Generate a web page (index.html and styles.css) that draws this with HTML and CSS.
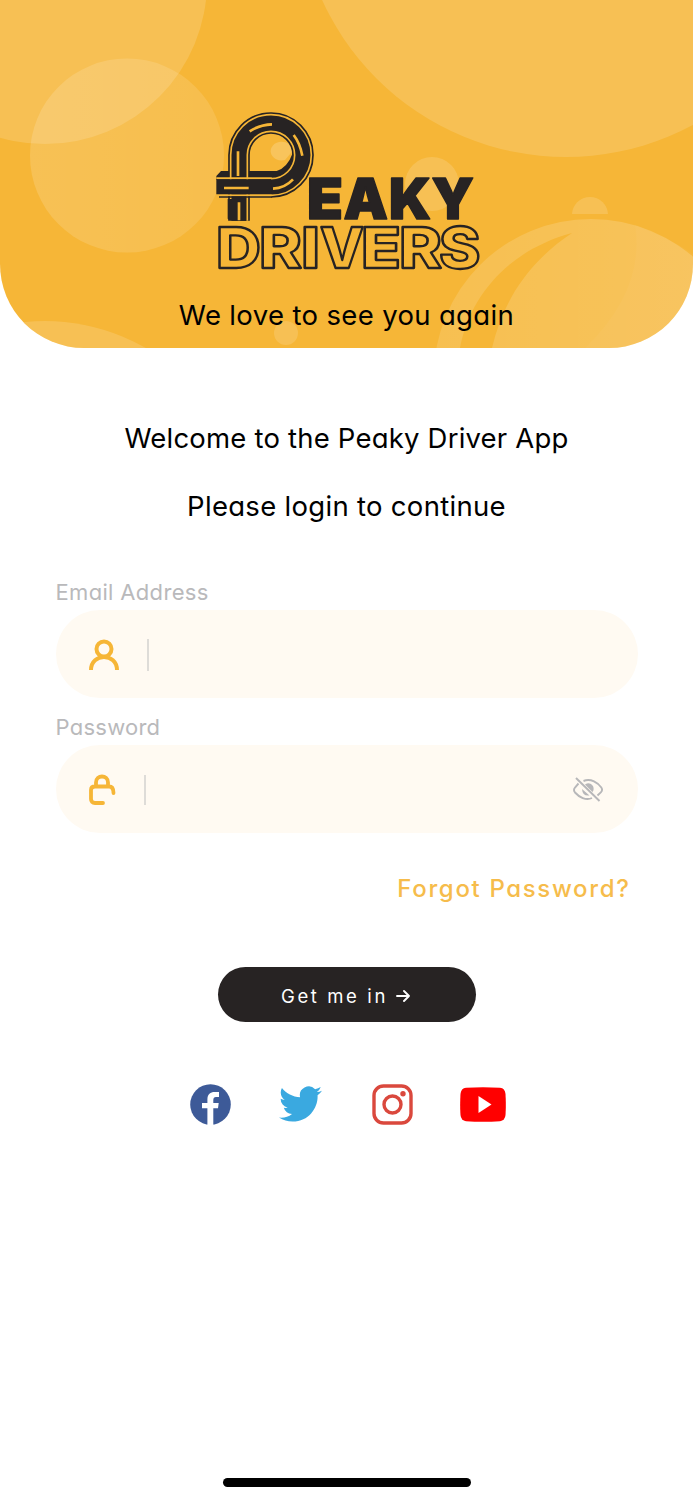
FILE: index.html
```html
<!DOCTYPE html>
<html lang="en">
<head>
<meta charset="utf-8">
<title>Peaky Drivers – Login</title>
<link rel="stylesheet" href="styles.css">
</head>
<body>
<main class="screen">
  <header class="hero">
    <svg class="bubbles" viewBox="0 0 693 348" aria-hidden="true">
      <defs>
        <linearGradient id="fade" x1="0" x2="1"><stop offset="0" stop-color="#fff" stop-opacity=".15"/><stop offset="1" stop-color="#fff" stop-opacity=".11"/></linearGradient>
        <linearGradient id="shine" x1="0" x2="1"><stop offset="0" stop-color="#fff" stop-opacity=".13"/><stop offset="1" stop-color="#fff" stop-opacity=".19"/></linearGradient>
        <clipPath id="cap"><path d="M560 190H620V214H560Z"/></clipPath>
      </defs>
      <g fill="#fff" fill-opacity=".145">
        <circle cx="45" cy="-18" r="162"/>
        <circle cx="127" cy="155.500" r="97" fill="url(#fade)" fill-opacity="1"/>
        <circle cx="566" cy="-111" r="268"/>
        <circle cx="286" cy="151" r="15"/>
        <circle cx="432" cy="184" r="27"/>
        <circle cx="590" cy="215" r="18" clip-path="url(#cap)"/>
        <circle cx="45" cy="523" r="202"/>
        <circle cx="286" cy="333" r="12"/>
        <circle cx="591" cy="376" r="157" fill="url(#shine)" fill-opacity="1"/>
        <path d="M635 225Q693 248 700 262V348H585Q645 290 635 225Z" fill-opacity=".03"/>
      </g>
      <path d="M572 233C513 249 471 291 460 348H492C503 302 527 263 572 233Z" fill="#f6b637"/>
    </svg>
    <svg class="logo" viewBox="205 100 290 180" role="img" aria-label="Peaky Drivers">
      <g transform="translate(205 100) scale(.33333)" fill="none">
        <circle cx="198" cy="165" r="66" fill="#f6b637"/>
        <path d="M263 153A33 28 0 1 0 240 180Z" fill="#f8c45c"/>
        <path d="M48 213H215Q247 204 263 160L276 190L220 240H34V228Z" fill="#272323"/>
        <g stroke="#272323" stroke-width="65"><path d="M102 362V165A96 96 0 0 1 294 165A96 96 0 0 1 198 261"/></g>
        <g stroke="#f6b637" stroke-width="55"><path d="M102 362V165A96 96 0 0 1 294 165A96 96 0 0 1 198 261"/></g>
        <g stroke="#272323" stroke-width="45"><path d="M102 362V165A96 96 0 0 1 294 165A96 96 0 0 1 198 261"/></g>
        <path d="M34 234.500H200M60 286H200" stroke="#f6b637" stroke-width="6"/>
        <path d="M34 238H199V283H34Z" fill="#272323"/>
        <path d="M42 291H200" stroke="#272323" stroke-width="5"/>
        <path d="M68 297H123V362H76L68 356Z" fill="#272323"/>
        <path d="M57 264H131M99 154V228M102 307V361M134 94Q165 74 201 73M266 105Q285 130 292 167M204 266Q240 264 264 238" stroke="#f6b637" stroke-width="8"/>
      </g>
      <g class="logo-solid">
        <text x="307" y="218.500" textLength="36" lengthAdjust="spacingAndGlyphs">E</text>
        <text x="343.500" y="218.500" textLength="44.500" lengthAdjust="spacingAndGlyphs">A</text>
        <text x="389" y="218.500" textLength="42" lengthAdjust="spacingAndGlyphs">K</text>
        <text x="431.500" y="218.500" textLength="42.500" lengthAdjust="spacingAndGlyphs">Y</text>
      </g>
      <g class="logo-outline">
        <text x="216" y="268" textLength="45" lengthAdjust="spacingAndGlyphs">D</text>
        <text x="259" y="268" textLength="43" lengthAdjust="spacingAndGlyphs">R</text>
        <text x="301" y="268" textLength="19" lengthAdjust="spacingAndGlyphs">I</text>
        <text x="320" y="268" textLength="44" lengthAdjust="spacingAndGlyphs">V</text>
        <text x="361" y="268" textLength="40" lengthAdjust="spacingAndGlyphs">E</text>
        <text x="399" y="268" textLength="43" lengthAdjust="spacingAndGlyphs">R</text>
        <text x="439" y="268" textLength="41.500" lengthAdjust="spacingAndGlyphs">S</text>
      </g>
    </svg>
    <p class="tagline">We love to see you again</p>
  </header>

  <section class="intro">
    <h1 class="line welcome">Welcome to the Peaky Driver App</h1>
    <p class="line prompt">Please login to continue</p>
  </section>

  <form class="form">
    <div class="label email-label">Email Address</div>
    <div class="field">
      <svg class="user" width="32" height="32" viewBox="0 0 32 32" fill="none" stroke="#f6b637" stroke-width="4"><circle cx="16" cy="10" r="7.500"/><path d="M3 31C3 13.500 29 13.500 29 31"/></svg>
      <span class="caret"></span>
    </div>
    <div class="label pass-label">Password</div>
    <div class="field">
      <svg class="lock" width="28" height="32" viewBox="0 0 28 32" fill="none" stroke="#f6b637" stroke-width="3.800" stroke-linecap="round" stroke-linejoin="round"><path d="M8 12V8.500C8 .500 20 .500 20 8.500V12M15 29H7Q3 29 3 25V16Q3 12.500 7 12.500H21Q25.500 12.500 25.500 19"/></svg>
      <span class="caret caret-pass"></span>
      <svg class="eye" width="32" height="28" viewBox="0 0 32 28" fill="none" stroke="#b7b7b9" stroke-width="1.900"><path d="M11.500 5C19 2 26 7 29.300 11.500Q31 14 29 16.200L25.500 19.500M6.500 7.500L3 11.500Q1 14 3 16.500C7 21 14 25 20 22"/><path d="M13 8.500Q18 5.500 21 10Q22.500 13.500 20.500 16ZM10 13L17.500 19.500Q10.500 20.500 10 13Z" fill="#b7b7b9" stroke="none"/><path d="M4 2L27.500 25"/></svg>
    </div>
    <a class="forgot">Forgot Password?</a>
    <button class="submit" type="button"><span>Get me in</span><svg width="14" height="14" viewBox="0 0 14 14" fill="none" stroke="#fff" stroke-width="1.900" stroke-linecap="round" stroke-linejoin="round"><path d="M1 7H13M8 2L13 7L8 12"/></svg></button>
  </form>

  <nav class="social">
    <svg class="fb" width="41" height="41" viewBox="0 0 41 41"><circle cx="20.500" cy="20.500" r="20.300" fill="#3d5a98"/><path d="M17.400 41V24.200H12V19H17.400V15.500C17.400 10 20.500 8 24.500 8H29V13H26Q23.300 13 23.300 16V19H28.700L28 24.200H23.300V41Z" fill="#fff"/></svg>
    <svg class="tw" width="43" height="36" viewBox="0 2 24 20" preserveAspectRatio="none"><path fill="#3aa9e0" d="M23.950 4.570a10 10 0 0 1-2.820.770 4.960 4.960 0 0 0 2.160-2.720c-.950.550-2 .950-3.130 1.180a4.920 4.920 0 0 0-8.380 4.480C7.690 8.100 4.070 6.130 1.640 3.160a4.820 4.820 0 0 0-.670 2.480c0 1.710.870 3.210 2.190 4.100a4.900 4.900 0 0 1-2.230-.620v.060a4.920 4.920 0 0 0 3.950 4.830 5 5 0 0 1-2.210.080 4.940 4.940 0 0 0 4.600 3.420A9.870 9.870 0 0 1 0 19.540a14 14 0 0 0 7.550 2.210c9.050 0 14-7.500 14-13.980 0-.210 0-.420-.020-.630a9.940 9.940 0 0 0 2.460-2.550z"/></svg>
    <svg class="ig" width="41" height="41" viewBox="0 0 41 41" fill="none" stroke="#da483d" stroke-width="3.400"><rect x="2" y="2" width="37" height="37" rx="9.500"/><circle cx="20.500" cy="20.500" r="8.500"/><circle cx="31" cy="9.700" r="2.700" fill="#da483d" stroke="none"/></svg>
    <svg class="yt" width="46" height="35" viewBox="0 0 46 35"><path fill="#f00" d="M6 .8Q23-.4 40 .8Q45 1.200 45.500 7Q46.200 18 45.500 28Q45 33.500 40 34.200Q23 35.400 6 34.200Q1 33.500.500 28Q-.2 18 .500 7Q1 1.200 6 .8Z"/><path fill="#fff" d="M18.500 9L31.500 17.500L18.500 26Z"/></svg>
  </nav>
  <div class="home-bar"></div>
</main>
</body>
</html>
```

FILE: styles.css
```css
* { box-sizing: border-box; }
body { margin: 0; background: #fff; font-family: Inter, "Open Sans", sans-serif; font-feature-settings: "cv11", "ss03"; color: #000; }
p, h1 { margin: 0; font-weight: 400; }
.screen { width: 693px; height: 1500px; display: flex; flex-direction: column; align-items: center; overflow: hidden; }
.hero { position: relative; width: 693px; height: 348px; padding-top: 100px; background: #f6b637; border-radius: 0 0 84px 84px; overflow: hidden; display: flex; flex-direction: column; align-items: center; }
.bubbles { position: absolute; inset: 0; width: 693px; height: 348px; }
.logo { position: relative; width: 290px; height: 180px; margin-left: 7px; overflow: visible; }
.logo-solid { font: 900 57px Inter, sans-serif; fill: #272323; stroke: #272323; stroke-width: 1.5; stroke-linejoin: round; }
.logo-outline { font: 800 57px Inter, sans-serif; fill: none; stroke: #272323; stroke-width: 2.3; stroke-linejoin: round; }
.tagline { position: relative; margin-top: 17px; font-size: 27.5px; line-height: 36px; letter-spacing: .35px; white-space: nowrap; }
.intro { padding-top: 72px; text-align: center; }
.line { font-size: 27.5px; line-height: 36px; white-space: nowrap; }
.welcome { letter-spacing: .2px; }
.prompt { margin-top: 32px; letter-spacing: .3px; }
.form { width: 582px; margin-top: 52px; display: flex; flex-direction: column; }
.label { height: 34px; font-size: 22px; line-height: 32px; letter-spacing: .33px; color: #b9b9bb; }
.pass-label { margin-top: 14px; height: 33px; letter-spacing: .25px; line-height: 31px; }
.field { height: 88px; padding: 1px 34px 0 32px; border-radius: 44px; background: #fffaf2; display: flex; align-items: center; }
.caret { width: 2px; height: 32px; margin-left: 27px; background: #dedcd8; }
.caret-pass { margin-left: 28px; height: 30px; }
.eye { margin-left: auto; }
.forgot { align-self: flex-end; margin: 39px 7px 0 0; font-size: 24px; font-weight: 500; line-height: 34px; letter-spacing: 1.65px; color: #f6bc4b; }
.submit { align-self: center; width: 258px; height: 55px; margin-top: 61px; padding: 2px 2px 0 0; border: 0; border-radius: 28px; background: #272323; color: #fff; display: flex; align-items: center; justify-content: center; gap: 8px; font: 400 18.5px Inter, sans-serif; letter-spacing: 2.6px; }
.social { width: 316px; height: 42px; margin: 61px 0 0 2px; display: flex; align-items: center; }
.tw { margin-left: 48px; }
.ig { margin-left: 50px; }
.yt { margin-left: 47px; }
.home-bar { width: 248px; height: 9px; margin: auto 0 13px; border-radius: 5px; background: #000; }
```
